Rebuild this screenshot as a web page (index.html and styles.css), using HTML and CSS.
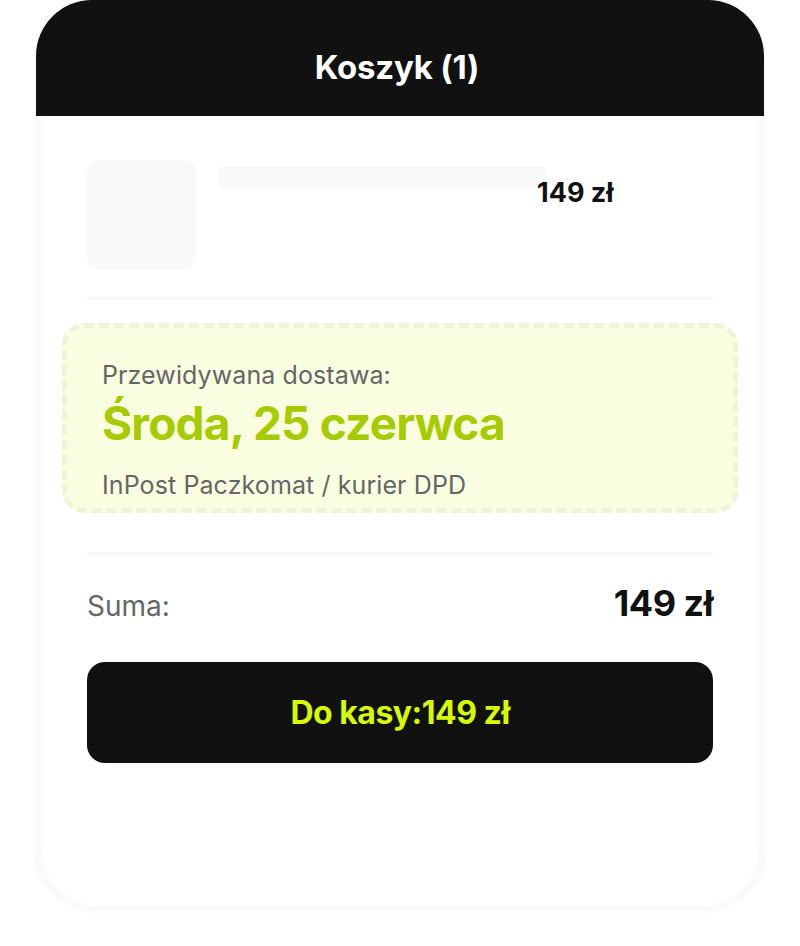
FILE: index.html
```html
<!DOCTYPE html>
<html lang="pl">

<head>
    <meta charset="UTF-8">
    <meta name="viewport" content="width=device-width, initial-scale=1.0">
    <title>Koszyk</title>
    <link rel="stylesheet" href="styles.css">
</head>

<body>
    <div class="cart">
        <div class="cart-header">Koszyk (1)</div>

        <div class="cart-body">
            <div class="item">
                <div class="item-thumb"></div>
                <div class="item-info">
                    <div class="item-name"></div>
                    <div class="item-price">149 zł</div>
                </div>
            </div>

            <div class="divider"></div>

            <div class="delivery">
                <div class="delivery-label">Przewidywana dostawa:</div>
                <div class="delivery-date">Środa, 25 czerwca</div>
                <div class="delivery-method">InPost Paczkomat / kurier DPD</div>
            </div>

            <div class="divider"></div>

            <div class="summary">
                <span class="summary-label">Suma:</span>
                <span class="summary-total">149 zł</span>
            </div>

            <button class="checkout">Do kasy:149 zł</button>
        </div>
    </div>
</body>

</html>
```

FILE: styles.css
```css
body {
    margin: 0;
    background-color: #ffffff;
    font-family: Inter, "Noto Sans", sans-serif;
    line-height: 1.2;
    color: #111111;
}

.cart {
    box-sizing: border-box;
    width: 734px;
    height: 913px;
    margin: 0 auto;
    border: 8px solid #fafafa;
    border-radius: 64px;
    background-color: #ffffff;
}

.cart-header {
    box-sizing: border-box;
    height: 116px;
    margin: -8px -5px 0;
    padding-top: 20px;
    padding-right: 6px;
    display: flex;
    align-items: center;
    justify-content: center;
    background-color: #111111;
    border-radius: 56px 56px 0 0;
    color: #ffffff;
    font-size: 33px;
    font-weight: 700;
    letter-spacing: -0.2px;
}

.cart-body {
    padding: 44px 46px 0;
    display: flex;
    flex-direction: column;
}

/* produkt */
.item {
    display: flex;
    gap: 22px;
}

.item-thumb {
    width: 109px;
    height: 109px;
    border-radius: 12px;
    background-color: #f9f9f9;
}

.item-info {
    display: flex;
    flex-direction: column;
    padding-top: 7px;
}

.item-name {
    width: 328px;
    height: 21px;
    border-radius: 4px;
    background-color: #f9f9f9;
}

.item-price {
    margin: -11px 0 0 319px;
    font-size: 27px;
    font-weight: 700;
}

.divider {
    height: 3px;
    margin-top: 28px;
    background-color: #f8f8f8;
}

/* dostawa */
.delivery {
    margin: 23px -25px 0;
    padding: 32px 35px 8px;
    border: 5px dashed #eff4d8;
    border-radius: 22px;
    background-color: #fafee0;
}

.delivery-label,
.delivery-method {
    font-size: 25px;
    letter-spacing: 0.1px;
    color: #666666;
}

.delivery-date {
    margin: 6px 0 19px;
    font-size: 46px;
    font-weight: 700;
    letter-spacing: -0.8px;
    color: #a6cb00;
}

.delivery + .divider {
    margin-top: 39px;
}

/* suma */
.summary {
    margin-top: 27px;
    display: flex;
    justify-content: space-between;
    align-items: baseline;
}

.summary-label {
    font-size: 28px;
    color: #666666;
}

.summary-total {
    font-size: 36px;
    font-weight: 700;
    letter-spacing: -0.5px;
}

.checkout {
    height: 101px;
    margin-top: 37px;
    border: none;
    border-radius: 18px;
    background-color: #111111;
    color: #d8fa00;
    font-family: Inter, "Noto Sans", sans-serif;
    font-size: 32px;
    font-weight: 700;
    letter-spacing: -0.5px;
    cursor: pointer;
}
```
